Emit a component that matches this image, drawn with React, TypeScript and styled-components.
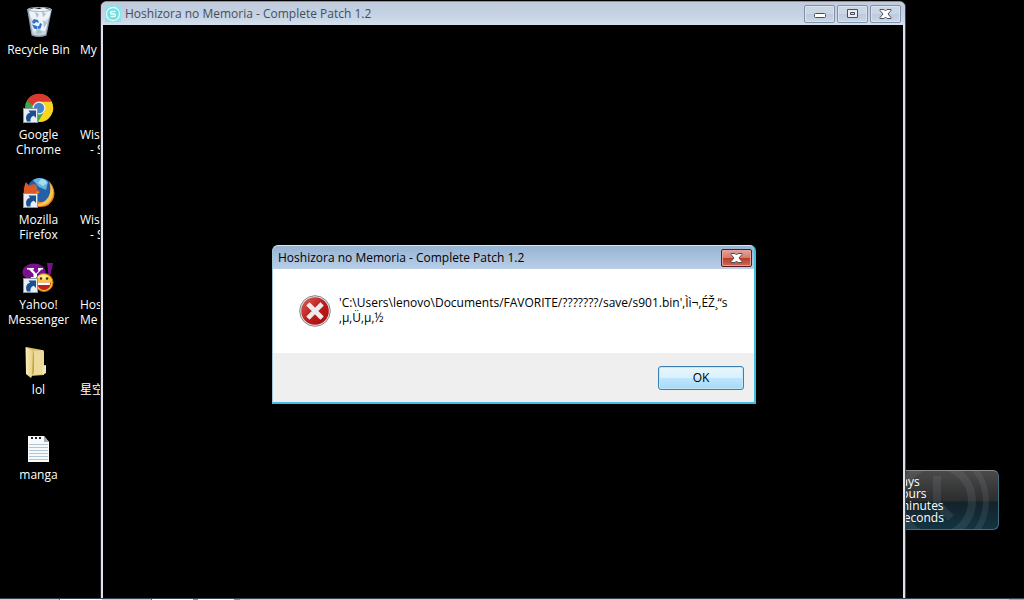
import React from "react";
import styled, { createGlobalStyle } from "styled-components";

const GlobalStyle = createGlobalStyle`
  * { box-sizing: border-box; }
  body {
    margin: 0;
    background: #000;
    color: #fff;
    font-family: "Open Sans", "Noto Sans", "Noto Sans CJK SC", sans-serif;
    font-size: 12px;
    line-height: 15px;
  }
`;

const Desktop = styled.div`
  position: relative;
  display: flex;
  flex-direction: column;
  height: 100vh;
  overflow: hidden;
  background: #000;
`;

const IconArea = styled.main`
  display: flex;
  flex: 1;
  gap: 3px;
  min-height: 0;
`;

const IconColumn = styled.ul`
  display: grid;
  grid-auto-rows: 85px;
  align-content: start;
  width: 77px;
  margin: 0;
  padding: 5px 0 0;
  list-style: none;
`;

const Shortcut = styled.li<{ $start?: boolean }>`
  display: flex;
  flex-direction: column;
  align-items: ${(p) => (p.$start ? "flex-start" : "center")};
  text-align: center;
`;

const Picture = styled.div`
  width: 34px;
  height: 36px;
  margin-bottom: 1px;

  svg { display: block; width: 34px; height: 36px; }
`;

const Line = styled.span<{ $indent?: boolean }>`
  display: block;
  padding-left: ${(p) => (p.$indent ? "10px" : "0")};
  white-space: nowrap;
`;

const Taskbar = styled.footer`
  display: flex;
  flex: none;
  height: 2px;
  border-top: 1px solid #39424f;
  background: #c3cede;
`;

const Task = styled.span<{ $w: number; $c: string }>`
  width: ${(p) => p.$w}px;
  background: ${(p) => p.$c};
`;

const TaskEnd = styled(Task)`
  margin-left: auto;
`;

const Gadget = styled.aside`
  position: absolute;
  top: 470px;
  left: 871px;
  width: 128px;
  height: 60px;
  overflow: hidden;
  border: 1px solid #3f6f80;
  border-top-color: #8b8b8b;
  border-radius: 6px;
  background: linear-gradient(#4a4a4a 0, #2b2d2e 30px, #14222a 31px, #123442 100%);
`;

const GadgetArt = styled.svg`
  position: absolute;
  inset: 0;
`;

const Counts = styled.div`
  position: relative;
  width: 73px;
  padding-top: 5px;
  line-height: 12px;
`;

const Count = styled.div<{ $start: number }>`
  padding-left: ${(p) => p.$start}px;
`;

const Window = styled.section`
  position: absolute;
  top: 1px;
  bottom: 2px;
  left: 101px;
  width: 804px;
  display: flex;
  flex-direction: column;
  border: 1px solid #8d929b;
  border-width: 1px 0 0;
  border-radius: 6px 6px 0 0;
  background: #e0e3ec;
  box-shadow: 1px 0 0 #45424d, -1px 0 0 #24222a;
`;

const TitleBar = styled.header`
  display: flex;
  flex: none;
  align-items: center;
  height: 23px;
  padding: 0 4px;
  border-radius: 5px 5px 0 0;
  background: linear-gradient(#c0cbdb, #c5d3e4 60%, #d5e0ed);
  color: #474d58;
`;

const AppIcon = styled.svg`
  flex: none;
  width: 16px;
  height: 16px;
  margin-right: 4px;
`;

const Title = styled.h1`
  flex: 1;
  margin: 0;
  font-size: 12px;
  font-weight: 400;
  line-height: 15px;
  white-space: nowrap;
`;

const Controls = styled.div`
  display: flex;
  gap: 2px;
`;

const ControlButton = styled.button`
  display: grid;
  place-items: center;
  width: 31px;
  height: 18px;
  padding: 0;
  border: 1px solid #7f91ab;
  border-radius: 2px;
  background: linear-gradient(#cbd6e4 50%, #bccbdc 50%, #c9d7e7);
  box-shadow: inset 0 0 0 1px #d9e2ed;
`;

const CloseButton = styled(ControlButton)`
  border-color: #571a22;
  background: linear-gradient(#e5a398 0, #d5796a 50%, #b93a28 50%, #cf6a50);
  box-shadow: inset 0 0 0 1px #e3a297;
`;

const Client = styled.div`
  flex: 1;
  margin: 0 2px;
  background: #000;
`;

const Dialog = styled.section`
  position: absolute;
  top: 245px;
  left: 272px;
  width: 484px;
  border: 1px solid #41bedb;
  border-width: 1px 2px 2px 1px;
  border-top-color: #d8e9f2;
  border-left-color: #9fc4d8;
  border-radius: 6px 6px 0 0;
  overflow: hidden;
  background: #efefef;
  color: #000;
`;

const DialogBar = styled.header`
  display: flex;
  align-items: center;
  height: 23px;
  padding: 0 2px 0 5px;
  background: linear-gradient(#97b3d3, #b9cfe8);
`;

const Message = styled.div`
  display: flex;
  align-items: flex-start;
  gap: 8px;
  height: 84px;
  padding: 26px 26px 0;
  background: #fff;

  svg { flex: none; }
  p { margin: 0; white-space: nowrap; }
`;

const Actions = styled.div`
  display: flex;
  justify-content: flex-end;
  padding: 13px 10px 12px;
`;

const OkButton = styled.button`
  width: 86px;
  height: 24px;
  padding: 0 0 1px;
  border: 1px solid #3c7fb1;
  border-radius: 3px;
  background: linear-gradient(#e9f6fd 0, #d9f0fc 50%, #bee6fd 50%, #a7d9f5);
  box-shadow: inset 0 0 0 1px #bfeafb;
  color: #000;
  font: inherit;
`;

const Arrow = () => (
  <g>
    <rect x="1.500" y="18.500" width="14" height="14" fill="#e9eef5" stroke="#8b949e" />
    <path d="M5 31.500c-2-4.500-.5-8 3-8.800l-1.500-2.200h7.500v7.500l-2.200-2.200c-2.600.7-3.600 2.500-3.300 5.700z" fill="#1c4f92" />
  </g>
);

const RecycleBin = () => (
  <svg viewBox="0 0 34 36" aria-hidden="true">
    <path d="M5 4l4.500 26.500q7.500 3 15 0L30 4z" fill="#8d9aa6" />
    <path d="M6.500 5l4 24.500q7 2 13 0L28.500 5z" fill="#c9d4df" />
    <path d="M7 5l5-2 5 1 5-1.500L29 6l-2 7-4 3 2 4-2 6-6-1-5 2-2-6 2-5-3-3z" fill="#edf3f8" />
    <path d="M13 7l4 2-2 4zM20 6l4 3-3 3zM21 15l4 3-3 5zM14 25l4-1 2 4-5 1z" fill="#b1bfcd" />
    <ellipse cx="17.500" cy="4.500" rx="12" ry="2" fill="none" stroke="#aab8c4" />
    <path d="M10 17l2-3 4 1 1 3-3-1-2 2zM10 19.500l2 4 3 1v-3.500zM15.500 24l3-.5 1.500-4.500-2-1-1 3h-1.500z" fill="#2e70cb" />
  </svg>
);

const Chrome = () => (
  <svg viewBox="0 0 34 36" aria-hidden="true">
    <circle cx="17" cy="18" r="14" fill="#3fa54a" />
    <path d="M17 18L4.900 11A14 14 0 0 1 30 12z" fill="#d93a2d" />
    <path d="M17 11.500h12.500A14 14 0 0 1 16 32l6.500-11z" fill="#fbd51d" />
    <path d="M5 11A14 14 0 0 1 29.500 11.500H17a7 7 0 0 0-6 4z" fill="#d93a2d" />
    <circle cx="17" cy="18" r="6.500" fill="#f0f0ee" />
    <circle cx="17" cy="18" r="5.200" fill="#4583c8" />
    <Arrow />
  </svg>
);

const Firefox = () => (
  <svg viewBox="0 0 34 36" aria-hidden="true">
    <circle cx="18" cy="16.500" r="13.500" fill="#2360a6" />
    <path d="M11 5q8-5 15 2l-2 8-7-3z" fill="#68b4e2" />
    <path d="M19 4q5 0 6 4l-4 3-5-3z" fill="#a6dcf2" />
    <path d="M27 6q7 8 5 16-3 10-14 10-11 0-15-10 0-7 2-12l3 3q3-2 7-1l-1 3 4 2-5 4q-1 5 5 6 9 1 11-8 0-6-2-13z" fill="#ed812a" />
    <path d="M28 8q5 8 2 15-4 8-13 8-4 0-7-2 9 1 14-4 6-6 4-17z" fill="#fac54a" />
    <path d="M2 20q-1-7 2-13l3 4q4-3 8-1l-2 4 4 1-6 5z" fill="#dd5924" />
    <Arrow />
  </svg>
);

const Yahoo = () => (
  <svg viewBox="0 0 34 36" aria-hidden="true">
    <ellipse cx="12" cy="12" rx="11.500" ry="8.500" fill="#7b1190" />
    <path d="M25 3h6l-2.500 12h-2z" fill="#7b1190" />
    <path d="M5 8h7v1.500h-1.500l3.500 4 3-3H16V8h5v1.500h-1.500L15 14v3h2v2H9v-2h2.500v-3L7 9.500H5z" fill="#fff" />
    <circle cx="22" cy="22.500" r="9" fill="#f9c531" stroke="#bf6d17" />
    <ellipse cx="21" cy="17" rx="5" ry="2.500" fill="#fdea8c" />
    <circle cx="19" cy="18.500" r="1.200" fill="#3e2717" />
    <circle cx="25" cy="18.500" r="1.200" fill="#3e2717" />
    <path d="M15 22.500h14q-1 7.500-7 7.500-6 0-7-7.500z" fill="#c3221f" />
    <path d="M16 22.500h12v2.500H16z" fill="#fff" />
    <Arrow />
  </svg>
);

const Folder = () => (
  <svg viewBox="0 0 34 36" aria-hidden="true">
    <defs>
      <linearGradient id="flap" x1="0" x2="1">
        <stop offset="0" stopColor="#faefbb" />
        <stop offset="1" stopColor="#e3cd80" />
      </linearGradient>
    </defs>
    <path d="M4 2l16 3q2 0 2 2v23L8 31z" fill="#dcc172" />
    <path d="M12 6l9-1 1 3v21l-12 1z" fill="#eddb9b" />
    <path d="M3.500 2l7 4q1 1 1 3v19l-2.500 5-5-4z" fill="url(#flap)" />
    <path d="M10 31l2-4V9l-1-3z" fill="#c4a54e" />
    <path d="M20.500 20.500l3.500-.5v8l-3.500 2z" fill="#f1e5b3" />
  </svg>
);

const Notepad = () => (
  <svg viewBox="0 0 34 36" aria-hidden="true">
    <path d="M6 6h16l5 6v20H6z" fill="#f7f9fa" />
    <path d="M22 6v6h5z" fill="#a4abb1" />
    <path d="M7 14.500h19M7 17.500h19M7 20.500h19M7 23.500h19M7 26.500h19M7 29.500h19" stroke="#b0c6d4" />
    <path d="M9 8h2M13 8h2M17 8h2" stroke="#222" strokeWidth="2" />
  </svg>
);

const Cross = () => (
  <svg width="13" height="10" viewBox="0 0 13 10" aria-hidden="true">
    <path d="M1 .5h4l1.500 1.500L8 .5h4v1L9 5l3 3.500v1H8L6.500 8 5 9.500H1v-1L4 5 1 1.500z" fill="#fff" stroke="#4a4e5c" />
  </svg>
);

const ErrorIcon = () => (
  <svg width="32" height="32" viewBox="0 0 32 32" role="img" aria-label="Error">
    <defs>
      <linearGradient id="red" x1="0" y1="0" x2="1" y2="1">
        <stop offset="0" stopColor="#d9635d" />
        <stop offset=".5" stopColor="#bd1c1c" />
        <stop offset="1" stopColor="#a80c0c" />
      </linearGradient>
    </defs>
    <circle cx="16" cy="16" r="15.300" fill="#e6e6e6" stroke="#858585" />
    <circle cx="16" cy="16" r="13.800" fill="url(#red)" />
    <path d="M10.500 10.500l11 11M21.500 10.500l-11 11" stroke="#ececec" strokeWidth="4.600" strokeLinecap="square" />
  </svg>
);

const shortcuts = [
  { icon: <RecycleBin />, lines: ["Recycle Bin"] },
  { icon: <Chrome />, lines: ["Google", "Chrome"] },
  { icon: <Firefox />, lines: ["Mozilla", "Firefox"] },
  { icon: <Yahoo />, lines: ["Yahoo!", "Messenger"] },
  { icon: <Folder />, lines: ["lol"] },
  { icon: <Notepad />, lines: ["manga"] },
];

const covered = [
  [{ text: "My" }],
  [{ text: "Wis" }, { text: "- S", indent: true }],
  [{ text: "Wis" }, { text: "- S", indent: true }],
  [{ text: "Hos" }, { text: "Me" }],
  [{ text: "星空" }],
];

const tasks: [number, string][] = [
  [59, "#c3cede"], [1, "#666"], [42, "#fff"], [49, "#c3cede"], [1, "#666"],
  [41, "#fff"], [5, "#8d929b"], [36, "#fff"], [6, "#8d929b"],
];

export default function App() {
  return (
    <Desktop>
      <GlobalStyle />
      <IconArea>
        <IconColumn>
          {shortcuts.map((s) => (
            <Shortcut key={s.lines[0]}>
              <Picture>{s.icon}</Picture>
              {s.lines.map((l) => <Line key={l}>{l}</Line>)}
            </Shortcut>
          ))}
        </IconColumn>
        <IconColumn>
          {covered.map((lines, i) => (
            <Shortcut key={i} $start>
              <Picture />
              {lines.map((l: { text: string; indent?: boolean }) => (
                <Line key={l.text} $indent={l.indent}>{l.text}</Line>
              ))}
            </Shortcut>
          ))}
        </IconColumn>
      </IconArea>

      <Gadget>
        <GadgetArt width="128" height="60" viewBox="0 0 128 60" aria-hidden="true">
          <g fill="none" stroke="#8a9499" strokeOpacity=".16">
            <circle cx="64" cy="30" r="36" strokeWidth="8" />
            <circle cx="64" cy="30" r="50" strokeWidth="6" />
            <path d="M65 5v28l14 14" strokeWidth="8" />
          </g>
        </GadgetArt>
        <Counts>
          <Count $start={22}>days</Count>
          <Count $start={22}>hours</Count>
          <Count $start={26}>minutes</Count>
          <Count $start={26}>seconds</Count>
        </Counts>
      </Gadget>

      <Window>
        <TitleBar>
          <AppIcon viewBox="0 0 16 16" aria-hidden="true">
            <rect width="16" height="16" fill="#8ce4e8" />
            <circle cx="8" cy="8" r="6.500" fill="#6fdce2" stroke="#dcffff" strokeWidth="1.300" />
            <path d="M10.500 5.500H7q-1.500 0-1.500 1.200T7 8h2q1.500 0 1.500 1.300T9 10.500H5.500" fill="none" stroke="#efffff" strokeWidth="1.300" />
          </AppIcon>
          <Title>Hoshizora no Memoria - Complete Patch 1.2</Title>
          <Controls>
            <ControlButton aria-label="Minimize">
              <svg width="12" height="10" viewBox="0 0 12 10"><rect x=".5" y="4.500" width="11" height="4" rx="1" fill="#fff" stroke="#4a4e5c" /></svg>
            </ControlButton>
            <ControlButton aria-label="Maximize">
              <svg width="12" height="10" viewBox="0 0 12 10"><path fillRule="evenodd" d="M.5 .5h10v8H.5zM3.500 3.500h4v2h-4z" fill="#e9edf3" stroke="#4a4e5c" /></svg>
            </ControlButton>
            <ControlButton aria-label="Close"><Cross /></ControlButton>
          </Controls>
        </TitleBar>
        <Client />
      </Window>

      <Dialog role="alertdialog" aria-labelledby="dialog-title">
        <DialogBar>
          <Title as="h2" id="dialog-title">Hoshizora no Memoria - Complete Patch 1.2</Title>
          <CloseButton aria-label="Close"><Cross /></CloseButton>
        </DialogBar>
        <Message>
          <ErrorIcon />
          <p>
            'C:\Users\lenovo\Documents/FAVORITE/???????/save/s901.bin'‚Ìì¬‚ÉŽ¸“s
            <br />
            ‚µ‚Ü‚µ‚½
          </p>
        </Message>
        <Actions><OkButton>OK</OkButton></Actions>
      </Dialog>

      <Taskbar>
        {tasks.map(([w, c], i) => <Task key={i} $w={w} $c={c} />)}
        <TaskEnd $w={15} $c="#a5a8ad" />
      </Taskbar>
    </Desktop>
  );
}
